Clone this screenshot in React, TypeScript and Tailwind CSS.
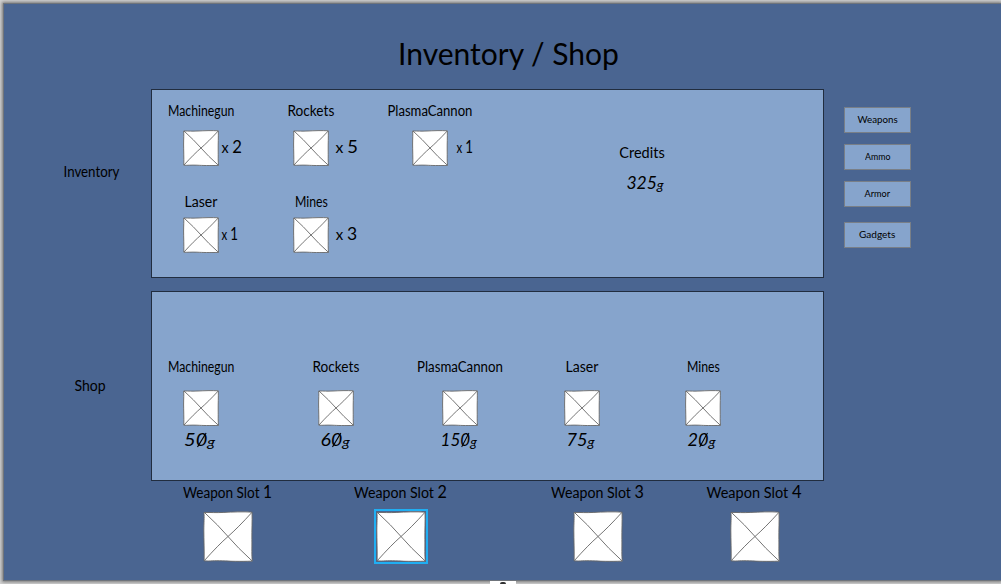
import React, { useLayoutEffect, useRef, useState } from "react";
import clsx from "clsx";

/** Single-line text, condensed or widened to an exact width. */
function Fit({ children, width, className }: { children: React.ReactNode; width: number; className?: string }) {
  const ref = useRef<HTMLSpanElement>(null);
  const [scale, setScale] = useState(1);
  useLayoutEffect(() => {
    if (ref.current) setScale(width / ref.current.offsetWidth);
  }, [width, children]);
  return (
    <span className={clsx("flex shrink-0 justify-center whitespace-nowrap", className)} style={{ width }}>
      <span ref={ref} className="inline-block shrink-0" style={{ transform: `scaleX(${scale})` }}>
        {children}
      </span>
    </span>
  );
}

/** A price in gold: tall digits with slashed zeros and a small "g". */
function Price({ amount, width, className }: { amount: string; width: number; className?: string }) {
  return (
    <Fit width={width} className={clsx("text-[17.5px] italic leading-5", className)}>
      {amount.split("").map((digit, i) =>
        digit === "0" ? (
          <span
            key={i}
            className="relative before:absolute before:left-1/2 before:top-[3px] before:h-4 before:w-px before:rotate-[28deg] before:bg-black"
          >
            0
          </span>
        ) : (
          digit
        ),
      )}
      <span className="relative top-px text-[14px]">g</span>
    </Fit>
  );
}

function Placeholder({ large = false }: { large?: boolean }) {
  return (
    <svg
      viewBox="0 0 36 36"
      preserveAspectRatio="none"
      className={clsx("block shrink-0", large ? "h-[51px] w-[50px]" : "h-9 w-9")}
      fill="none"
      stroke="#666"
      strokeWidth={large ? 0.65 : 0.9}
    >
      <path
        d="M.7 1 C6 1 9 1.3 15 1 S29 .4 35.3 .8 C35.5 8 35.1 13 35.2 20 S35 31 35.5 35.4 C26 35.7 20 35.5 14 35.2 S5 35.5 .8 35.2 C1 28 .6 20 .6 14 S1 5 .7 1Z"
        fill="#fff"
      />
      <path d="M1 1 Q11 10 18 18 T35.3 35.2 M35.2 1 Q25 12 18 18 T1 35" />
    </svg>
  );
}

type Item = { name: string; width: number; count: string; countWidth: number; countGap: string; gap: string };

function InventoryItem({ item, boxGap }: { item: Item; boxGap: string }) {
  return (
    <div className={clsx("flex w-[100px] flex-col items-center", item.gap)}>
      <Fit width={item.width} className="h-5 text-[14.5px] leading-5">{item.name}</Fit>
      <div className={clsx("grid w-full grid-cols-[32px_36px_32px] items-center", boxGap)}>
        <span />
        <Placeholder />
        <Fit width={item.countWidth} className={clsx("-mt-0.5 text-[17.5px] leading-5", item.countGap)}>
          <span className="text-[15px]">x </span>
          {item.count}
        </Fit>
      </div>
    </div>
  );
}

const firstRow: Item[] = [
  { name: "Machinegun", width: 66, count: "2", countWidth: 20, countGap: "ml-[3px]", gap: "-ml-px" },
  { name: "Rockets", width: 47, count: "5", countWidth: 22, countGap: "ml-[7px]", gap: "ml-[10px]" },
  { name: "PlasmaCannon", width: 85, count: "1", countWidth: 16, countGap: "ml-[9px]", gap: "ml-[19px]" },
];

const secondRow: Item[] = [
  { name: "Laser", width: 33, count: "1", countWidth: 16, countGap: "ml-[3px]", gap: "-ml-px" },
  { name: "Mines", width: 33, count: "3", countWidth: 21, countGap: "ml-[7px]", gap: "ml-[10px]" },
];

const shopItems = [
  { name: "Machinegun", width: 66, price: "50", pw: 31, gap: "-ml-px" },
  { name: "Rockets", width: 47, price: "60", pw: 29, gap: "ml-[35px]" },
  { name: "PlasmaCannon", width: 86, price: "150", pw: 36, gap: "ml-[24px]" },
  { name: "Laser", width: 33, price: "75", pw: 28, gap: "ml-[22px]" },
  { name: "Mines", width: 33, price: "20", pw: 28, gap: "ml-[21px]" },
];

const slots = [
  { name: "Weapon Slot", n: "1", width: 89, gap: "" },
  { name: "Weapon Slot", n: "2", width: 93, gap: "ml-[73px]", selected: true },
  { name: "Weapon Slot", n: "3", width: 93, gap: "ml-[97px]" },
  { name: "Weapon Slot", n: "4", width: 95, gap: "ml-[57px]" },
];

const filters = [
  { name: "Weapons", width: 40, gap: "" },
  { name: "Ammo", width: 25, gap: "mt-[11px]" },
  { name: "Armor", width: 26, gap: "mt-[11px]" },
  { name: "Gadgets", width: 36, gap: "mt-[15px]" },
];

const panel = "w-[673px] border border-[#212d3f] bg-[#86a4cc]";

export default function App() {
  return (
    <div className="relative h-[584px] w-[1001px] overflow-hidden bg-[#d2d2d2] pl-[3px] pt-[3px] font-['Lato','Open_Sans',sans-serif] text-black">
      <main className="flex h-[578px] w-[998px] flex-col border-y border-l border-[#6f747b] bg-[#4a6591] shadow-[0_0_3px_1px_#777]">
        <h1 className="ml-[394px] mt-[29px] h-10">
          <Fit width={221} className="text-[30px] leading-10">Inventory / Shop</Fit>
        </h1>

        <div className="mt-4 flex h-[189px]">
          <div className="w-[147px] pl-[59px] pt-[73px]">
            <Fit width={56} className="text-[14.5px] leading-5">Inventory</Fit>
          </div>
          <section className={clsx(panel, "flex h-[189px]")}>
            <div>
              <div className="flex pt-[11px]">
                {firstRow.map((item) => <InventoryItem key={item.name} item={item} boxGap="mt-[9px]" />)}
              </div>
              <div className="flex pt-[26px]">
                {secondRow.map((item) => <InventoryItem key={item.name} item={item} boxGap="mt-[5px]" />)}
              </div>
            </div>
            <div className="ml-[138px] mt-[53px] flex w-[48px] flex-col items-center">
              <Fit width={45} className="text-[14.5px] leading-5">Credits</Fit>
              <Price amount="325" width={37} className="ml-1.5 mt-[10px]" />
            </div>
          </section>
          <nav className="ml-5 mt-[18px] flex flex-col">
            {filters.map((f) => (
              <button
                key={f.name}
                className={clsx("flex h-[26px] w-[67px] items-center justify-center border border-[#797f87] bg-[#86a4cc]", f.gap)}
              >
                <Fit width={f.width} className="text-[9.5px] leading-3">{f.name}</Fit>
              </button>
            ))}
          </nav>
        </div>

        <div className="mt-[13px] flex">
          <div className="w-[147px] pl-[71px] pt-[85px]">
            <Fit width={31} className="text-[14.5px] leading-5">Shop</Fit>
          </div>
          <section className={clsx(panel, "flex h-[190px] pt-[65px]")}>
            {shopItems.map((item) => (
              <div key={item.name} className={clsx("flex w-[100px] flex-col items-center", item.gap)}>
                <Fit width={item.width} className="text-[14.5px] leading-5">{item.name}</Fit>
                <div className="mt-[13px]"><Placeholder /></div>
                <Price amount={item.price} width={item.pw} className="mr-0.5 mt-1" />
              </div>
            ))}
          </section>
        </div>

        <div className="ml-[173px] mt-px flex">
          {slots.map((slot) => (
            <div key={slot.n} className={clsx("flex w-[100px] flex-col items-center", slot.gap)}>
              <Fit width={slot.width} className="h-5 text-[14.5px] leading-5">
                {slot.name} <span className="text-[16.5px]">{slot.n}</span>
              </Fit>
              <div className={clsx("ml-px mt-[7px] border-2", slot.selected ? "border-[#20aef2]" : "border-transparent")}>
                <Placeholder large />
              </div>
            </div>
          ))}
        </div>
      </main>
      <div className="absolute bottom-0 left-[490px] flex h-[3px] w-[26px] justify-center bg-white">
        <span className="mt-px h-[2px] w-1.5 rounded-t-full bg-[#333]" />
      </div>
    </div>
  );
}
